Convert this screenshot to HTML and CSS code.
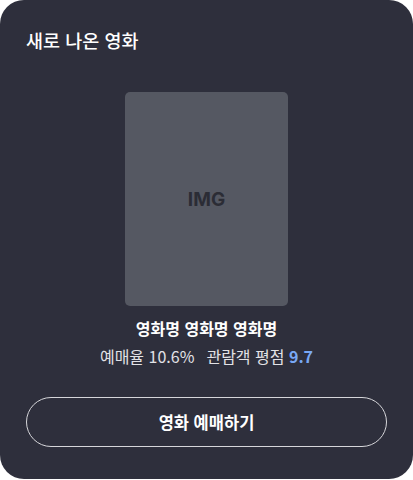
FILE: index.html
```html
<!DOCTYPE html>
<html lang="ko">
<head>
    <meta charset="UTF-8">
    <meta name="viewport" content="width=device-width, initial-scale=1.0">
    <title>새로 나온 영화</title>
    <link rel="stylesheet" href="styles.css">
</head>
<body>
    <section class="card">
        <h2 class="card-title">새로 나온 영화</h2>
        <div class="movie">
            <div class="poster">IMG</div>
            <p class="movie-name">영화명 영화명 영화명</p>
            <p class="movie-stats">예매율 10.6%<span class="gap"></span>관람객 평점 <span class="score">9.7</span></p>
        </div>
        <button class="book-btn" type="button">영화 예매하기</button>
    </section>
</body>
</html>
```

FILE: styles.css
```css
body {
    margin: 0;
    background-color: #ffffff;
    font-family: "Noto Sans CJK KR", "Noto Sans", sans-serif;
}
.card {
    box-sizing: border-box;
    width: 413px;
    height: 479px;
    background-color: #2e2f3c;
    border-radius: 24px;
    padding: 28px 26px 0;
    color: #ffffff;
}
.card-title {
    margin: 0;
    font-size: 18.5px;
    line-height: 24px;
    font-weight: 500;
}
.movie {
    display: flex;
    flex-direction: column;
    align-items: center;
    margin-top: 40px;
}
.poster {
    width: 163px;
    height: 214px;
    border-radius: 5px;
    background-color: #555862;
    color: #2b2c35;
    font-family: "Inter", "Liberation Sans", sans-serif;
    font-weight: 700;
    font-size: 19px;
    display: flex;
    align-items: center;
    justify-content: center;
}
.movie-name {
    margin: 11px 0 0;
    font-size: 16px;
    line-height: 22px;
    font-weight: 700;
}
.movie-stats {
    margin: 6px 0 0;
    font-size: 16px;
    line-height: 22px;
    color: #e2e2e6;
}
.gap {
    display: inline-block;
    width: 12px;
}
.score {
    color: #79a8f5;
    font-weight: 700;
}
.book-btn {
    display: block;
    width: 100%;
    height: 50px;
    margin-top: 30px;
    border: 1px solid #d6d6da;
    border-radius: 25px;
    background: transparent;
    color: #ffffff;
    font-family: inherit;
    font-size: 16.5px;
    font-weight: 700;
    cursor: pointer;
}
```
